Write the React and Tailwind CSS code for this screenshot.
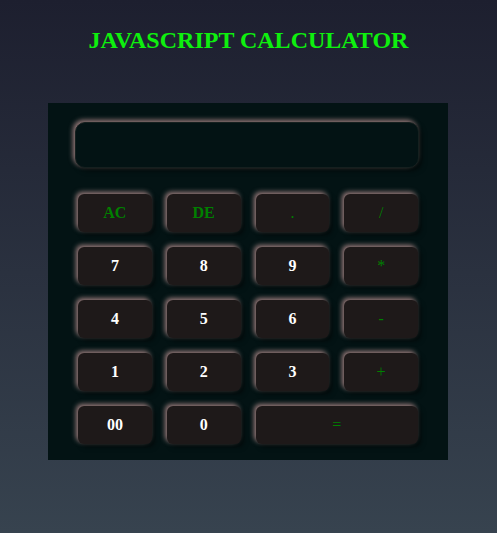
import React from "react";

const keys = [
  { t: "AC", c: "op-bold" },
  { t: "DE", c: "op-bold" },
  { t: ".", c: "op" },
  { t: "/", c: "op" },
  { t: "7", c: "num" },
  { t: "8", c: "num" },
  { t: "9", c: "num" },
  { t: "*", c: "op" },
  { t: "4", c: "num" },
  { t: "5", c: "num" },
  { t: "6", c: "num" },
  { t: "-", c: "op" },
  { t: "1", c: "num" },
  { t: "2", c: "num" },
  { t: "3", c: "num" },
  { t: "+", c: "op" },
  { t: "00", c: "num" },
  { t: "0", c: "num" },
  { t: "=", c: "op", wide: true },
];

function Key({ k }) {
  const color =
    k.c === "num"
      ? "text-white font-bold"
      : k.c === "op-bold"
      ? "text-[#008000] font-bold"
      : "text-[#008000] font-normal";
  return (
    <button
      className={
        "h-[38px] rounded-[6px] bg-[#1e1919] text-[16px] flex items-center justify-center shadow-[-2px_-2px_5px_rgba(255,195,195,0.6),3px_3px_5px_rgba(0,0,0,0.5)] " +
        color +
        (k.wide ? " col-span-2" : "")
      }
      style={{ fontFamily: '"Liberation Serif", "Times New Roman", serif' }}
    >
      {k.t}
    </button>
  );
}

export default function App() {
  return (
    <div
      className="min-h-[533px] w-full bg-gradient-to-b from-[#1d1f2f] to-[#37434f] flex flex-col items-center"
      style={{ fontFamily: '"Liberation Serif", "Times New Roman", serif' }}
    >
      <h1 className="mt-[25px] h-[30px] text-[24px] leading-[30px] font-bold text-[#0ef00e]">
        JAVASCRIPT CALCULATOR
      </h1>
      <div className="mt-[48px] self-start ml-[48px] w-[400px] h-[357px] bg-[#031314] pt-[19px] pl-[27px] pr-[29px] pb-[17px]">
        <div className="h-[46px] rounded-[10px] bg-[#031314] border border-[#15201f] shadow-[-2px_-2px_5px_rgba(255,195,195,0.6),3px_3px_5px_rgba(0,0,0,0.5)]" />
        <div className="mt-[26px] ml-[3px] mr-[1px] grid grid-cols-4 gap-x-[15px] gap-y-[15px]">
          {keys.map((k) => (
            <Key key={k.t} k={k} />
          ))}
        </div>
      </div>
    </div>
  );
}
